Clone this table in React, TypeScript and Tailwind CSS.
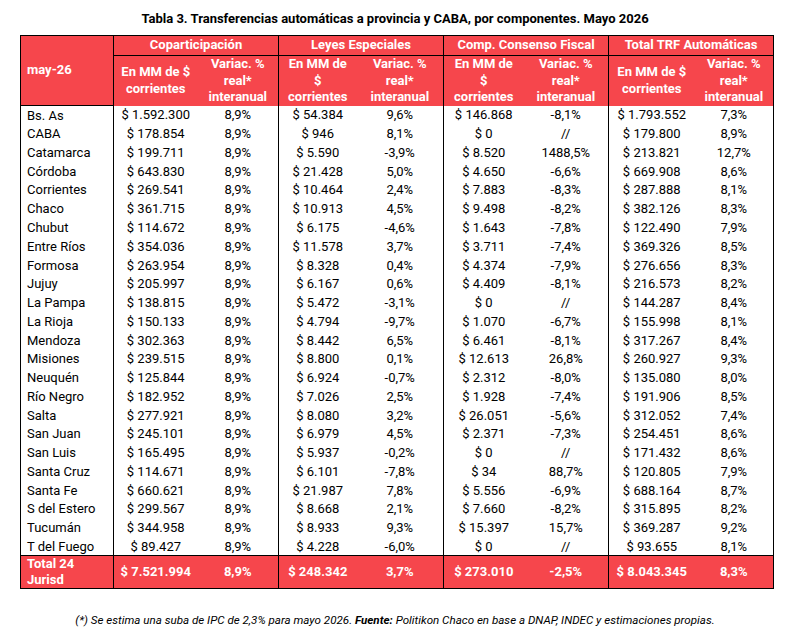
import React from "react";

type Row = [string, string, string, string, string, string, string, string, string];

const rows: Row[] = [
  ["Bs. As", "$ 1.592.300", "8,9%", "$ 54.384", "9,6%", "$ 146.868", "-8,1%", "$ 1.793.552", "7,3%"],
  ["CABA", "$ 178.854", "8,9%", "$ 946", "8,1%", "$ 0", "//", "$ 179.800", "8,9%"],
  ["Catamarca", "$ 199.711", "8,9%", "$ 5.590", "-3,9%", "$ 8.520", "1488,5%", "$ 213.821", "12,7%"],
  ["Córdoba", "$ 643.830", "8,9%", "$ 21.428", "5,0%", "$ 4.650", "-6,6%", "$ 669.908", "8,6%"],
  ["Corrientes", "$ 269.541", "8,9%", "$ 10.464", "2,4%", "$ 7.883", "-8,3%", "$ 287.888", "8,1%"],
  ["Chaco", "$ 361.715", "8,9%", "$ 10.913", "4,5%", "$ 9.498", "-8,2%", "$ 382.126", "8,3%"],
  ["Chubut", "$ 114.672", "8,9%", "$ 6.175", "-4,6%", "$ 1.643", "-7,8%", "$ 122.490", "7,9%"],
  ["Entre Ríos", "$ 354.036", "8,9%", "$ 11.578", "3,7%", "$ 3.711", "-7,4%", "$ 369.326", "8,5%"],
  ["Formosa", "$ 263.954", "8,9%", "$ 8.328", "0,4%", "$ 4.374", "-7,9%", "$ 276.656", "8,3%"],
  ["Jujuy", "$ 205.997", "8,9%", "$ 6.167", "0,6%", "$ 4.409", "-8,1%", "$ 216.573", "8,2%"],
  ["La Pampa", "$ 138.815", "8,9%", "$ 5.472", "-3,1%", "$ 0", "//", "$ 144.287", "8,4%"],
  ["La Rioja", "$ 150.133", "8,9%", "$ 4.794", "-9,7%", "$ 1.070", "-6,7%", "$ 155.998", "8,1%"],
  ["Mendoza", "$ 302.363", "8,9%", "$ 8.442", "6,5%", "$ 6.461", "-8,1%", "$ 317.267", "8,4%"],
  ["Misiones", "$ 239.515", "8,9%", "$ 8.800", "0,1%", "$ 12.613", "26,8%", "$ 260.927", "9,3%"],
  ["Neuquén", "$ 125.844", "8,9%", "$ 6.924", "-0,7%", "$ 2.312", "-8,0%", "$ 135.080", "8,0%"],
  ["Río Negro", "$ 182.952", "8,9%", "$ 7.026", "2,5%", "$ 1.928", "-7,4%", "$ 191.906", "8,5%"],
  ["Salta", "$ 277.921", "8,9%", "$ 8.080", "3,2%", "$ 26.051", "-5,6%", "$ 312.052", "7,4%"],
  ["San Juan", "$ 245.101", "8,9%", "$ 6.979", "4,5%", "$ 2.371", "-7,3%", "$ 254.451", "8,6%"],
  ["San Luis", "$ 165.495", "8,9%", "$ 5.937", "-0,2%", "$ 0", "//", "$ 171.432", "8,6%"],
  ["Santa Cruz", "$ 114.671", "8,9%", "$ 6.101", "-7,8%", "$ 34", "88,7%", "$ 120.805", "7,9%"],
  ["Santa Fe", "$ 660.621", "8,9%", "$ 21.987", "7,8%", "$ 5.556", "-6,9%", "$ 688.164", "8,7%"],
  ["S del Estero", "$ 299.567", "8,9%", "$ 8.668", "2,1%", "$ 7.660", "-8,2%", "$ 315.895", "8,2%"],
  ["Tucumán", "$ 344.958", "8,9%", "$ 8.933", "9,3%", "$ 15.397", "15,7%", "$ 369.287", "9,2%"],
  ["T del Fuego", "$ 89.427", "8,9%", "$ 4.228", "-6,0%", "$ 0", "//", "$ 93.655", "8,1%"],
];

const groups = ["Coparticipación", "Leyes Especiales", "Comp. Consenso Fiscal", "Total TRF Automáticas"];
const widths = ["w-[93px]", "w-[84px]", "w-[81px]", "w-[78px]", "w-[87px]", "w-[80px]", "w-[85px]", "w-[86px]", "w-[79px]"];

// group edges sit after columns 0, 2, 4, 6
const edge = (i: number) => (i % 2 === 0 && i < 8 ? "border-r border-black" : "");

export default function App() {
  return (
    <div className="w-[790px] h-[643px] bg-white text-black font-['Roboto',sans-serif]">
      <div className="pt-[11px] text-center text-[13px] leading-[16px] font-bold">
        Tabla 3. Transferencias automáticas a provincia y CABA, por componentes. Mayo 2026
      </div>
      <table className="ml-[20px] mt-[8px] w-[753px] table-fixed border-collapse border border-black text-[13px]">
        <colgroup>
          {widths.map((w, i) => (
            <col key={i} className={w} />
          ))}
        </colgroup>
        <thead className="bg-[#f6464c] font-bold text-white leading-[16.5px]">
          <tr className="h-[20px]">
            <th rowSpan={2} className="border-b border-r border-black px-[6px] text-left font-bold">
              may-26
            </th>
            {groups.map((g) => (
              <th key={g} colSpan={2} className="border-b border-r border-black p-0 text-center font-bold">
                {g}
              </th>
            ))}
          </tr>
          <tr className="h-[48px]">
            <th className="p-0 font-bold">En MM de $<br />corrientes</th>
            <th className="border-r border-black p-0 font-bold">Variac. %<br />real*<br />interanual</th>
            <th className="p-0 font-bold">En MM de<br />$<br />corrientes</th>
            <th className="border-r border-black p-0 font-bold">Variac. %<br />real*<br />interanual</th>
            <th className="p-0 font-bold">En MM de<br />$<br />corrientes</th>
            <th className="border-r border-black p-0 font-bold">Variac. %<br />real*<br />interanual</th>
            <th className="p-0 font-bold">En MM de $<br />corrientes</th>
            <th className="p-0 font-bold">Variac. %<br />real*<br />interanual</th>
          </tr>
        </thead>
        <tbody className="leading-[15px]">
          {rows.map((r) => (
            <tr key={r[0]} className="h-[18.78px]">
              {r.map((c, i) => (
                <td
                  key={i}
                  className={`p-0 ${i === 0 ? "pl-[6px] text-left" : "text-center"} ${edge(i)}`}
                >
                  {c}
                </td>
              ))}
            </tr>
          ))}
          <tr className="h-[33px] border-t border-black bg-[#f6464c] font-bold text-white leading-[16px]">
            <td className="border-r border-black pl-[6px]">
              Total 24
              <br />
              Jurisd
            </td>
            <td className="text-center">$ 7.521.994</td>
            <td className="border-r border-black text-center">8,9%</td>
            <td className="text-center">$ 248.342</td>
            <td className="border-r border-black text-center">3,7%</td>
            <td className="text-center">$ 273.010</td>
            <td className="border-r border-black text-center">-2,5%</td>
            <td className="text-center">$ 8.043.345</td>
            <td className="text-center">8,3%</td>
          </tr>
        </tbody>
      </table>
      <p className="mt-[24px] text-center text-[11.6px] italic leading-[15px]">
        (*) Se estima una suba de IPC de 2,3% para mayo 2026. <span className="font-bold">Fuente:</span> Politikon
        Chaco en base a DNAP, INDEC y estimaciones propias.
      </p>
    </div>
  );
}
